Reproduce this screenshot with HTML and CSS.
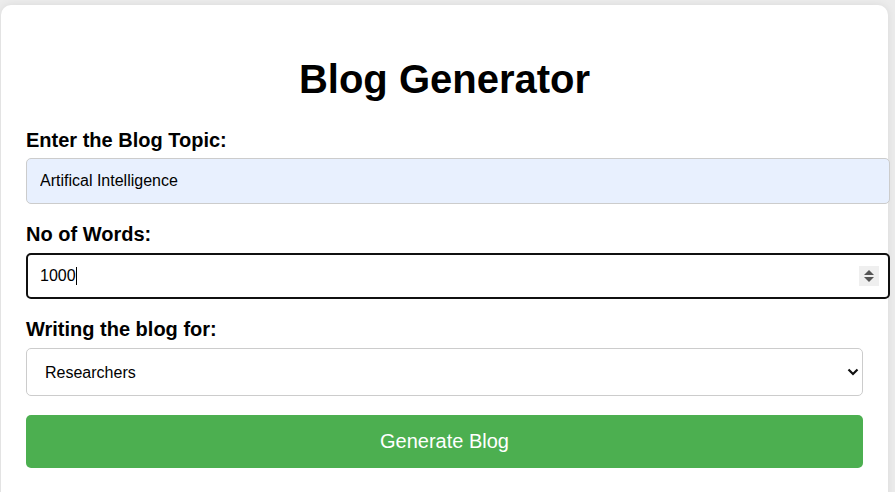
FILE: index.html
```html
<!DOCTYPE html>
<html lang="en">
<head>
<meta charset="utf-8">
<title>Blog Generator</title>
<link rel="stylesheet" href="styles.css">
</head>
<body>
<div class="card">
  <h1 class="title">Blog Generator</h1>
  <form class="form">
    <label class="label first" for="topic">Enter the Blog Topic:</label>
    <input class="field autofill" id="topic" type="text" value="Artifical Intelligence">

    <label class="label" for="words">No of Words:</label>
    <div class="num-wrap">
      <input class="field focused" id="words" type="number" value="1000">
      <span class="caret"></span>
      <span class="spin">
        <svg width="20" height="20" viewBox="0 0 20 20"><path d="M10 4 L15 9 L5 9 Z" fill="#555"/><path d="M5 11 L15 11 L10 16 Z" fill="#555"/></svg>
      </span>
    </div>

    <label class="label" for="aud">Writing the blog for:</label>
    <div class="sel-wrap">
      <select class="select" id="aud">
        <option>Researchers</option>
        <option>Data Scientist</option>
        <option>Common People</option>
      </select>
      <svg class="chev" width="12" height="8" viewBox="0 0 12 8"><path d="M1.5 1.5 L6 6 L10.5 1.5" fill="none" stroke="#111" stroke-width="2.2"/></svg>
    </div>

    <button class="btn" type="button">Generate Blog</button>
  </form>
</div>
</body>
</html>
```

FILE: styles.css
```css
html, body {
  margin: 0;
}
body {
  background: #ececec;
  padding: 5px 0 0 1px;
  font-family: "Liberation Sans", Arial, sans-serif;
  overflow: hidden;
}
.card {
  width: 887px;
  box-sizing: border-box;
  background: #fff;
  border-radius: 10px;
  padding: 24px 25px 25px;
  box-shadow: 0 0 8px rgba(0,0,0,0.08);
  min-height: 520px;
}
.title {
  font-size: 40px;
  font-weight: bold;
  text-align: center;
  margin: 27px 0 27px;
  line-height: 46px;
  color: #000;
}
.form {
  display: flex;
  flex-direction: column;
  align-items: flex-start;
}
.label {
  font-size: 20px;
  font-weight: bold;
  line-height: 23px;
  margin-bottom: 7px;
  color: #000;
}
.label.first {
  margin-bottom: 6px;
}
.field {
  width: 864px;
  height: 46px;
  box-sizing: border-box;
  margin: 0 0 19px;
  padding: 0 12px 0 13px;
  border: 1px solid #ccc;
  border-radius: 5px;
  font-family: "Liberation Sans", Arial, sans-serif;
  font-size: 16px;
  color: #000;
  background: #fff;
  outline: none;
}
.autofill {
  background: #e8f0fe;
}
.num-wrap {
  position: relative;
  margin-bottom: 19px;
}
.num-wrap .field {
  margin: 0;
}
.focused {
  border: 2px solid #101010;
  padding-left: 12px;
  -moz-appearance: textfield;
}
.focused::-webkit-inner-spin-button,
.focused::-webkit-outer-spin-button {
  -webkit-appearance: none;
  margin: 0;
}
.caret {
  position: absolute;
  left: 50px;
  top: 14px;
  width: 1px;
  height: 18px;
  background: #000;
}
.spin {
  position: absolute;
  left: 833px;
  top: 13px;
  width: 20px;
  height: 20px;
  background: #efefef;
  display: block;
}
.spin svg {
  display: block;
}
.sel-wrap {
  position: relative;
  margin-bottom: 19px;
}
.select {
  width: 837px;
  height: 48px;
  box-sizing: border-box;
  padding: 0 12px 0 18px;
  border: 1px solid #ccc;
  border-radius: 5px;
  font-family: "Liberation Sans", Arial, sans-serif;
  font-size: 16px;
  color: #000;
  background: #fff;
  -webkit-appearance: none;
  appearance: none;
  display: block;
}
.chev {
  position: absolute;
  left: 821px;
  top: 20px;
  display: block;
}
.btn {
  width: 837px;
  height: 53px;
  background: #4caf50;
  color: #fff;
  border: none;
  border-radius: 5px;
  font-family: "Liberation Sans", Arial, sans-serif;
  font-size: 20px;
  padding: 0;
}
```
